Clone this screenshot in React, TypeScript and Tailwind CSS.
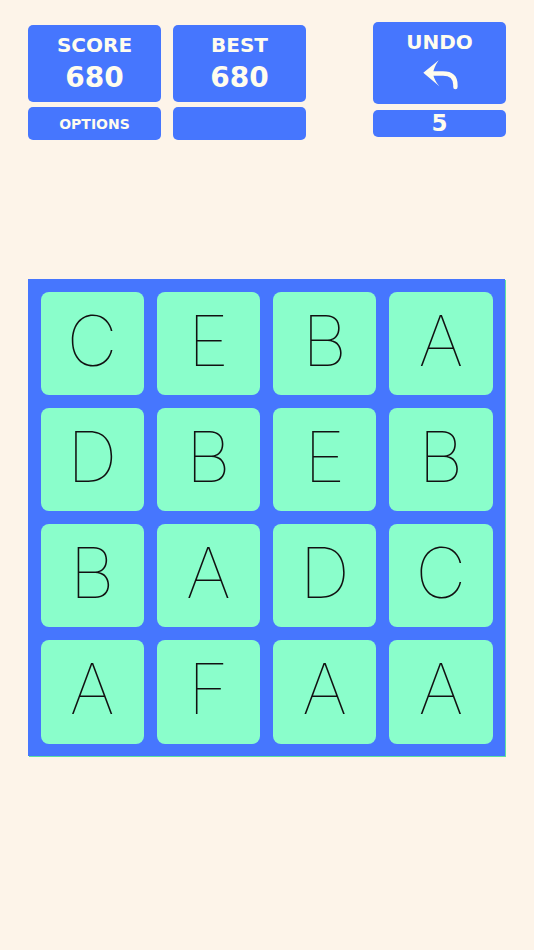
import React from "react"

const BOARD = [
  ["C", "E", "B", "A"],
  ["D", "B", "E", "B"],
  ["B", "A", "D", "C"],
  ["A", "F", "A", "A"],
]

const label = "font-['DejaVu_Sans',_Verdana,_sans-serif] font-bold text-[#fffcee] leading-none"

function UndoArrow() {
  return (
    <svg width="38" height="34" viewBox="0 0 38 34" fill="none">
      <path d="M2.3 14.7 L17.7 2.3 Q13 9 12 15.2 Q13 22 18.3 28.3 Z" fill="#fffcee" />
      <path d="M12 15.5 H22 Q34.4 15.5 34.4 27 V29" stroke="#fffcee" strokeWidth="4.4" strokeLinecap="round" />
    </svg>
  )
}

export default function App() {
  return (
    <div className="min-h-[950px] w-full bg-[#fdf4e9]">
      {/* top bar */}
      <div className="flex items-start px-[28px]">
        <div className="mt-[25px] flex gap-[12px]">
          <div className="flex w-[133px] flex-col gap-[5px]">
            <div className="flex h-[77px] flex-col items-center rounded-[5px] bg-[#4676fe] pt-[10px]">
              <span className={`${label} text-[20px]`}>SCORE</span>
              <span className={`${label} mt-[9px] text-[28px]`}>680</span>
            </div>
            <div className="flex h-[33px] items-center justify-center rounded-[5px] bg-[#4676fe]">
              <span className={`${label} text-[14px]`}>OPTIONS</span>
            </div>
          </div>
          <div className="flex w-[133px] flex-col gap-[5px]">
            <div className="flex h-[77px] flex-col items-center rounded-[5px] bg-[#4676fe] pt-[10px]">
              <span className={`${label} text-[20px]`}>BEST</span>
              <span className={`${label} mt-[9px] text-[28px]`}>680</span>
            </div>
            <div className="h-[33px] rounded-[5px] bg-[#4676fe]" />
          </div>
        </div>
        <div className="ml-auto mt-[22px] flex w-[133px] flex-col gap-[6px]">
          <div className="flex h-[82px] flex-col items-center rounded-[5px] bg-[#4676fe] pt-[10px]">
            <span className={`${label} text-[20px]`}>UNDO</span>
            <div className="mt-[6px]">
              <UndoArrow />
            </div>
          </div>
          <div className="flex h-[27px] items-center justify-center rounded-[5px] bg-[#4676fe]">
            <span className={`${label} text-[23px]`}>5</span>
          </div>
        </div>
      </div>

      {/* board */}
      <div className="mx-[28px] mt-[139px] w-[477px] bg-[#4676fe] p-[12.5px] shadow-[1px_1px_0_#5ee0a0]">
        <div className="grid grid-cols-4 gap-[13px]">
          {BOARD.flat().map((ch, i) => (
            <div
              key={i}
              className="flex aspect-square items-center justify-center rounded-[8px] bg-[#8afecb] pb-[5px]"
            >
              <span className="font-['Inter',_'Liberation_Sans',_sans-serif] text-[70px] font-[100] leading-none text-[#111]">
                {ch}
              </span>
            </div>
          ))}
        </div>
      </div>
    </div>
  )
}
